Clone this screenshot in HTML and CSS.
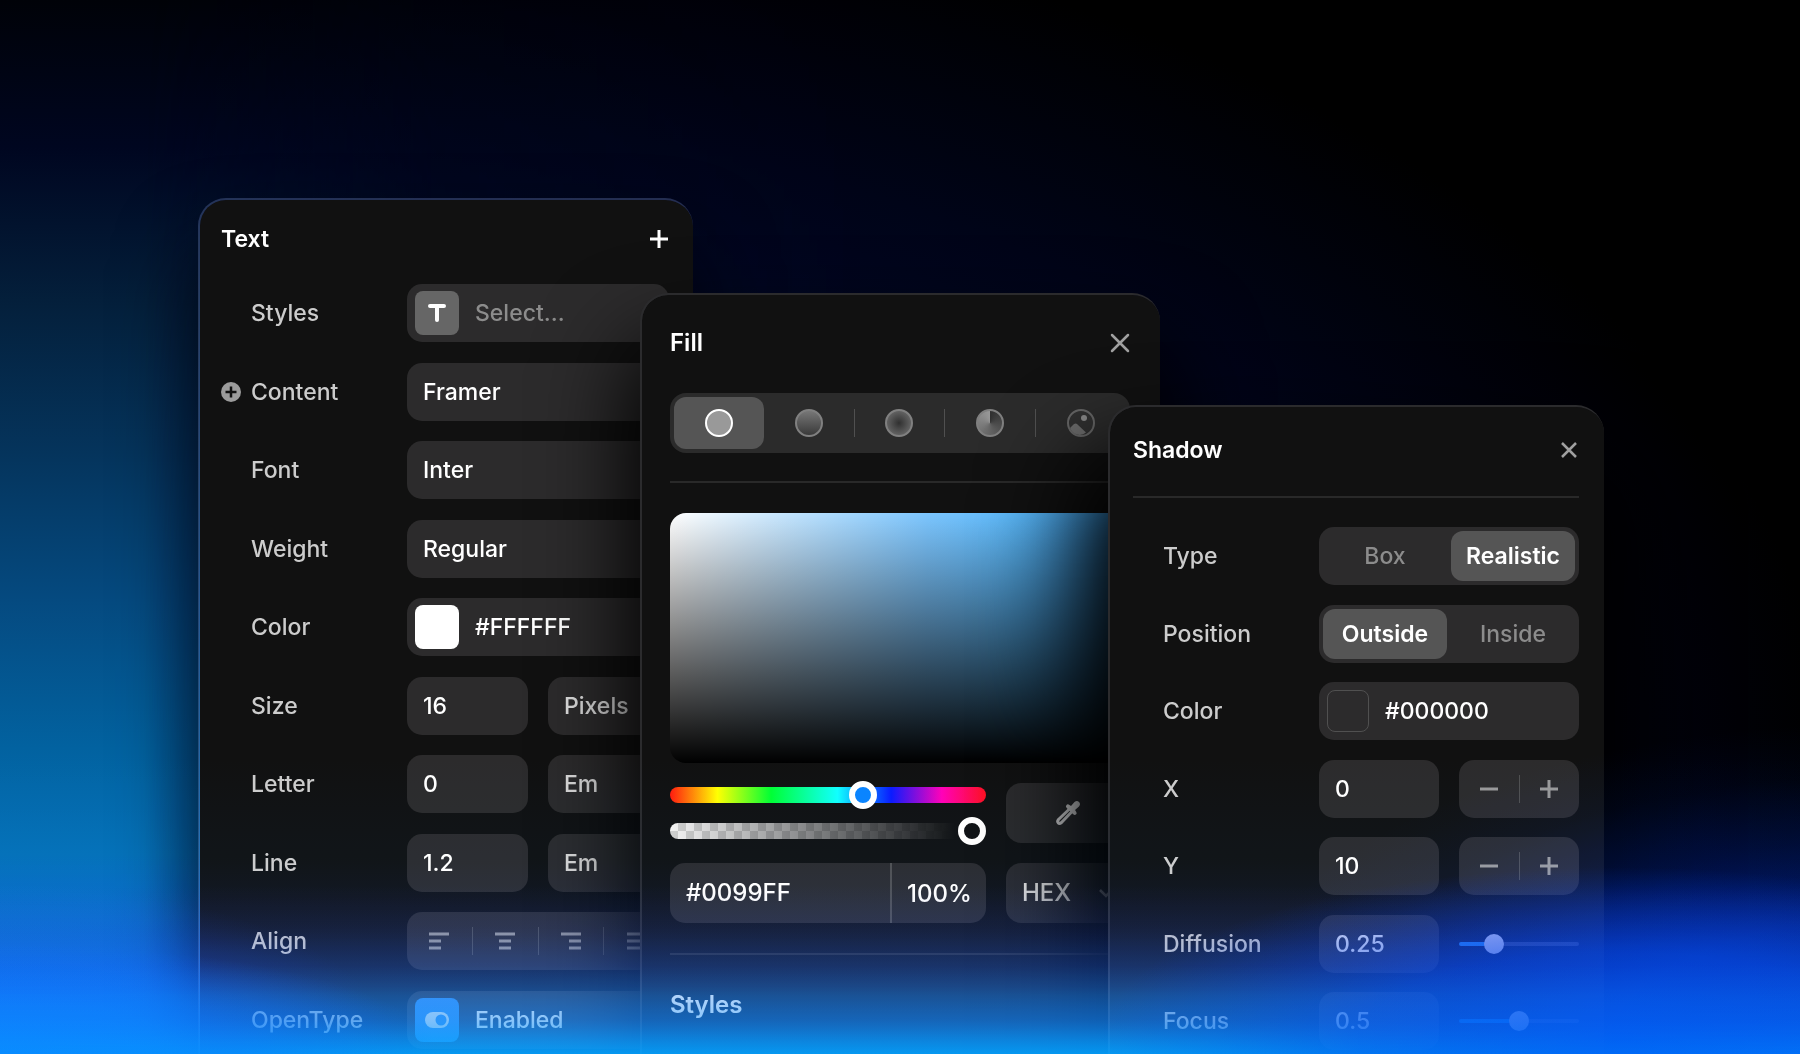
FILE: index.html
```html
<!DOCTYPE html>
<html lang="en">
<head>
<meta charset="utf-8">
<title>Text, Fill and Shadow panels</title>
<link rel="stylesheet" href="styles.css">
</head>
<body>
<main class="stage">

  <section class="panel panel-text">
    <header class="head">
      <h2>Text</h2>
      <button class="icon-btn bright" type="button" aria-label="Add"><svg width="20" height="20" viewBox="0 0 20 20"><path d="M10 1v18M1 10h18" stroke="currentColor" stroke-width="3" fill="none"/></svg></button>
    </header>
    <div class="rows rows-text">
      <div class="row"><span class="label">Styles</span>
        <button class="field value-dim" type="button"><span class="swatch swatch-t"><svg width="18" height="18" viewBox="0 0 18 18"><path d="M2 2h14M9 2v14" stroke="#fff" stroke-width="4" stroke-linecap="round" fill="none"/></svg></span>Select…</button></div>
      <div class="row"><label class="label" for="content"><svg class="mark" width="20" height="20" viewBox="0 0 20 20"><circle cx="10" cy="10" r="10" fill="#9c9c9c"/><path d="M10 4.500v11M4.500 10h11" stroke="#111" stroke-width="2.500"/></svg>Content</label><input class="field" id="content" value="Framer"></div>
      <div class="row"><label class="label" for="font">Font</label><input class="field" id="font" value="Inter"></div>
      <div class="row"><label class="label" for="weight">Weight</label><select class="field" id="weight"><option>Regular</option></select></div>
      <div class="row"><label class="label" for="color1">Color</label>
        <div class="field"><span class="swatch swatch-white"></span><input class="bare" id="color1" value="#FFFFFF"></div></div>
      <div class="row"><label class="label" for="size">Size</label><input class="field" id="size" value="16"><select class="field soft" aria-label="Size unit"><option>Pixels</option></select></div>
      <div class="row"><label class="label" for="letter">Letter</label><input class="field" id="letter" value="0"><select class="field soft" aria-label="Letter unit"><option>Em</option></select></div>
      <div class="row"><label class="label" for="line">Line</label><input class="field" id="line" value="1.2"><select class="field soft" aria-label="Line unit"><option>Em</option></select></div>
      <div class="row"><span class="label">Align</span>
        <div class="field split">
          <button type="button" aria-label="Left"><svg width="20" height="18" viewBox="0 0 20 18"><path d="M0 2h20M0 9h12M0 16h12" stroke="currentColor" stroke-width="3"/></svg></button>
          <button type="button" aria-label="Center"><svg width="20" height="18" viewBox="0 0 20 18"><path d="M0 2h20M4 9h12M4 16h12" stroke="currentColor" stroke-width="3"/></svg></button>
          <button type="button" aria-label="Right"><svg width="20" height="18" viewBox="0 0 20 18"><path d="M0 2h20M8 9h12M8 16h12" stroke="currentColor" stroke-width="3"/></svg></button>
          <button type="button" aria-label="Justify"><svg width="20" height="18" viewBox="0 0 20 18"><path d="M0 2h20M0 9h20M0 16h20" stroke="currentColor" stroke-width="3"/></svg></button>
        </div></div>
      <div class="row"><span class="label">OpenType</span>
        <button class="field" type="button"><span class="swatch swatch-blue"><svg width="24" height="16" viewBox="0 0 24 16"><rect width="24" height="16" rx="8" fill="#e4f0ff"/><circle cx="16" cy="8" r="5.500" fill="#3a88ff"/></svg></span>Enabled</button></div>
    </div>
  </section>

  <section class="panel panel-fill">
    <header class="head">
      <h2>Fill</h2>
      <button class="icon-btn" type="button" aria-label="Close fill"><svg width="20" height="20" viewBox="0 0 20 20"><path d="M2 2l16 16M18 2L2 18" stroke="currentColor" stroke-width="2.500" stroke-linecap="round"/></svg></button>
    </header>
    <div class="modes">
      <button class="on" type="button" aria-label="Solid"><i class="dot dot-solid"></i></button>
      <button type="button" aria-label="Linear"><i class="dot dot-linear"></i></button>
      <button type="button" aria-label="Radial"><i class="dot dot-radial"></i></button>
      <button type="button" aria-label="Conic"><i class="dot dot-conic"></i></button>
      <button type="button" aria-label="Image"><svg width="28" height="28" viewBox="0 0 28 28"><circle cx="14" cy="14" r="13" fill="#303030" stroke="#666" stroke-width="2"/><circle cx="17" cy="9" r="3" fill="#888"/><path d="M3 19l4-4q2-1 3 0l9 8.500q-4 3.500-9 2-5-1.500-7-6.500z" fill="#6c6c6c"/></svg></button>
    </div>
    <hr>
    <div class="picker"></div>
    <div class="tools">
      <div class="sliders">
        <input class="slide hue" type="range" min="0" max="100" value="62" aria-label="Hue">
        <input class="slide alpha" type="range" min="0" max="100" value="100" aria-label="Opacity">
      </div>
      <button class="field center" type="button" aria-label="Pick color"><svg width="26" height="26" viewBox="0 0 26 26"><path d="M15 8.500L3.500 19.500q-1.500 2-.3 3.300 1.300 1.200 3.300-.3L17.500 11" fill="none" stroke="currentColor" stroke-width="3" stroke-linejoin="round"/><path d="M11.500 5q1.200-1.500 3 0l1.500 1 3.500-4q2.500-2 4.500 0t0 4.500l-4 3.500 1 1.500q1.500 1.800 0 3-1.500 1-3-.5l-6.300-6q-1.500-1.500-.2-3z" fill="currentColor"/></svg></button>
      <div class="field pair"><input class="bare" value="#0099FF" aria-label="Hex"><input class="bare pct" value="100%" aria-label="Opacity value"></div>
      <button class="field fmt" type="button">HEX<svg width="14" height="9" viewBox="0 0 14 9"><path d="M1 1l6 6 6-6" fill="none" stroke="#aaa" stroke-width="2.500"/></svg></button>
    </div>
    <hr>
    <h3>Styles</h3>
  </section>

  <section class="panel panel-shadow">
    <header class="head">
      <h2>Shadow</h2>
      <button class="icon-btn" type="button" aria-label="Close shadow"><svg width="20" height="20" viewBox="0 0 20 20"><path d="M3 3l14 14M17 3L3 17" stroke="currentColor" stroke-width="2.500"/></svg></button>
    </header>
    <hr>
    <div class="rows rows-shadow">
      <div class="row"><span class="label">Type</span><div class="toggle"><button type="button">Box</button><button class="on" type="button">Realistic</button></div></div>
      <div class="row"><span class="label">Position</span><div class="toggle"><button class="on" type="button">Outside</button><button type="button">Inside</button></div></div>
      <div class="row"><label class="label" for="color2">Color</label><div class="field"><span class="swatch swatch-black"></span><input class="bare" id="color2" value="#000000"></div></div>
      <div class="row"><label class="label" for="sx">X</label><input class="field" id="sx" value="0">
        <div class="field split"><button type="button" aria-label="Decrease X"><svg width="20" height="20" viewBox="0 0 20 20"><path d="M1 10h18" stroke="currentColor" stroke-width="3"/></svg></button><button type="button" aria-label="Increase X"><svg width="20" height="20" viewBox="0 0 20 20"><path d="M1 10h18M10 1v18" stroke="currentColor" stroke-width="3"/></svg></button></div></div>
      <div class="row"><label class="label" for="sy">Y</label><input class="field" id="sy" value="10">
        <div class="field split"><button type="button" aria-label="Decrease Y"><svg width="20" height="20" viewBox="0 0 20 20"><path d="M1 10h18" stroke="currentColor" stroke-width="3"/></svg></button><button type="button" aria-label="Increase Y"><svg width="20" height="20" viewBox="0 0 20 20"><path d="M1 10h18M10 1v18" stroke="currentColor" stroke-width="3"/></svg></button></div></div>
      <div class="row"><label class="label" for="dif">Diffusion</label><input class="field" id="dif" value="0.25"><input class="level level-a" type="range" min="0" max="100" value="25" aria-label="Diffusion level"></div>
      <div class="row"><label class="label" for="foc">Focus</label><input class="field" id="foc" value="0.5"><input class="level level-b" type="range" min="0" max="100" value="50" aria-label="Focus level"></div>
    </div>
  </section>

  <div class="glow haze"></div>
  <div class="glow light"></div>
</main>
</body>
</html>
```
FILE: styles.css
```css
* { box-sizing: border-box; }
body { margin: 0; background: #000; color: #fff; font: 500 24px/32px Inter, "Liberation Sans", sans-serif; }
button, input, select { font: inherit; color: inherit; margin: 0; }
button { border: 0; background: none; padding: 0; }
h2, h3 { margin: 0; font-size: inherit; font-weight: 600; }
hr { width: 100%; height: 2px; margin: 0; border: 0; background: rgba(255, 255, 255, .1); }

.stage {
  position: relative;
  isolation: isolate;
  display: flex;
  justify-content: center;
  min-height: 100vh;
  overflow: hidden;
  padding-left: 2px;
  background:
    radial-gradient(ellipse 82% 85% at 20% 75%, #000e3a 0%, #000828 50%, #000418 75%, transparent 100%),
    #000;
}
.stage::before {
  content: "";
  position: absolute;
  inset: 0;
  z-index: -1;
  background: linear-gradient(#000208 0, #000620 14%, #04203c 29%, #05345c 43%, #054a80 57%, #0262a0 71%, #0570b8 81%, #0a68c8 87%, #0858d8 94%, #0870e8 100%);
  mask-image: linear-gradient(90deg, #000 8%, rgba(0, 0, 0, .8) 11%, rgba(0, 0, 0, .2) 24%, transparent 48%);
}

.panel {
  flex: none;
  border: 2px solid rgba(150, 180, 255, .24);
  border-width: 2px 0 0 2px;
  border-radius: 28px 28px 0 0;
  background: #111;
  background-clip: padding-box;
}
.panel-text { width: 495px; margin-top: 198px; padding: 0 24px 0 21px; font-size: 23px; box-shadow: 0 50px 80px rgba(0, 0, 10, .8); }
.panel-fill { width: 520px; margin: 293px 0 0 -53px; padding: 0 30px 0 28px; border-color: #2b2b2d; box-shadow: 0 60px 90px 10px #000; }
.panel-shadow { width: 496px; margin: 405px 0 0 -52px; padding: 0 25px 0 23px; border-color: #2b2b2d; font-size: 23px; box-shadow: 0 80px 90px 36px #000; }

.head { display: flex; align-items: center; justify-content: space-between; }
.panel-text .head { height: 78px; }
.panel-fill .head { height: 98px; padding-bottom: 2px; }
.panel-shadow .head { height: 89px; padding-bottom: 3px; }
.icon-btn { display: flex; color: #a0a0a0; }
.bright { color: #fff; }

.rows { display: flex; flex-direction: column; justify-content: space-between; }
.rows-text { min-height: 765px; margin-top: 6px; }
.rows-shadow { min-height: 523px; margin-top: 29px; }
.row { display: grid; grid-template-columns: 136px minmax(0, 1fr) minmax(0, 1fr); gap: 20px; align-items: center; padding-left: 30px; }
.row > :nth-child(2):last-child { grid-column: span 2; }
.label { display: flex; align-items: center; color: #ccc; }
.mark { flex: none; margin: 0 10px 0 -30px; }

.field {
  display: flex;
  align-items: center;
  width: 100%;
  height: 58px;
  padding: 0 16px;
  border: 0;
  border-radius: 15px;
  outline: 0;
  background: #2c2b2c;
  appearance: none;
}
.value-dim { color: #8c8c8c; }
.soft { color: #e0e0e0; }
.bare { flex: 1; min-width: 0; width: 100%; padding: 0; border: 0; outline: 0; background: none; }
.swatch { display: flex; flex: none; align-items: center; justify-content: center; width: 44px; height: 44px; margin: 0 16px 0 -8px; border-radius: 8px; }
.swatch-t { background: #666; }
.swatch-white { background: #fff; }
.swatch-blue { background: #3a88ff; }
.swatch-black { width: 42px; height: 42px; border: 1px solid #505050; }
.split { padding: 0; color: #999; }
.split button { display: flex; flex: 1; align-items: center; justify-content: center; height: 28px; }
.split button + button, .modes button + button + button { border-left: 1px solid #505050; }

.modes { display: flex; align-items: center; height: 60px; padding: 4px; border-radius: 16px; background: #2b2b2b; }
.modes button { display: flex; flex: 1; align-items: center; justify-content: center; height: 28px; }
.modes .on { height: 52px; border-radius: 12px; background: #555; }
.dot { width: 28px; height: 28px; border: 2px solid #808080; border-radius: 50%; background-origin: border-box; }
.dot-solid { border-color: #fff; background: #999; }
.dot-linear { background: linear-gradient(#777, #3a3a3a); }
.dot-radial { background: radial-gradient(circle, #303030, #777); }
.dot-conic { background: conic-gradient(#303030, #999); }

.modes + hr { margin-top: 28px; }
.picker {
  height: 250px;
  margin-top: 30px;
  border-radius: 16px;
  background:
    linear-gradient(transparent, #000),
    linear-gradient(90deg, #fff, #7cc6ff 56%, #5cbafc 75%, #40adff);
}
.tools { display: grid; grid-template-columns: 316px 1fr; gap: 20px; margin-top: 20px; }
.tools .field { height: 60px; }
.sliders { display: flex; flex-direction: column; gap: 20px; padding-top: 4px; }
.slide { width: 100%; height: 16px; border-radius: 8px; outline: 0; appearance: none; }
.hue { background: linear-gradient(90deg, #ff1a0d, #ff0 15%, #0f3 32%, #1ff 53%, #0a84ff 62%, #0a1aff 70%, #ff00b8 86%, #ff1020); }
.alpha { background: linear-gradient(90deg, transparent, #111 90%), repeating-conic-gradient(#d0d0d0 0 25%, #f4f4f4 0 50%) 0 0 / 16px 16px; }
.slide::-webkit-slider-thumb { width: 28px; height: 28px; border: 6px solid #fff; border-radius: 50%; background: #0a84ff; appearance: none; }
.alpha::-webkit-slider-thumb { background: #111; }
.center { justify-content: center; color: #e4e4e4; }
.pair { gap: 14px; }
.pair .pct { flex: 0 0 80px; height: 60px; padding-left: 15px; border-left: 2px solid #505050; }
.fmt { gap: 28px; color: #eee; }
.tools + hr { margin-top: 30px; }
.panel h3 { margin-top: 34px; }

.toggle { display: flex; gap: 4px; height: 58px; padding: 4px; border-radius: 15px; background: #2c2b2c; }
.toggle button { flex: 1 1 0; border-radius: 12px; color: #8c8c8c; }
.toggle .on { background: #555; color: #fff; font-weight: 600; }

.level { width: 100%; height: 4px; border-radius: 2px; outline: 0; appearance: none; }
.level-a { background: linear-gradient(90deg, #3090ff 29%, #404050 29%); }
.level-b { background: linear-gradient(90deg, #1080ff 50%, #404050 50%); }
.level::-webkit-slider-thumb { width: 20px; height: 20px; border-radius: 50%; background: #e4e4ff; appearance: none; }

.glow {
  position: absolute;
  inset: auto 0 0;
  height: 420px;
  pointer-events: none;
}
/* tints and fades the panels near the bottom edge */
.haze {
  background:
    radial-gradient(ellipse 520px 170px at 90% 96%, rgba(0, 50, 225, .8) 0, rgba(0, 48, 220, .6) 50%, transparent 100%),
    radial-gradient(ellipse 440px 110px at 0 100%, rgba(10, 100, 255, .8), rgba(10, 90, 255, .5) 55%, transparent),
    linear-gradient(transparent 60%, rgba(50, 80, 190, .14) 72%, rgba(40, 100, 230, .3) 84%, rgba(20, 115, 240, .5) 92%, rgba(4, 135, 250, .85) 100%);
}
/* adds light on top without dulling text */
.light {
  mix-blend-mode: screen;
  background:
    radial-gradient(ellipse 660px 330px at 104% 100%, rgba(0, 50, 220, .6) 0, rgba(0, 46, 210, .5) 40%, rgba(0, 36, 170, .28) 65%, rgba(0, 26, 120, .1) 84%, transparent 100%),
    radial-gradient(ellipse 400px 170px at 0 100%, rgba(0, 50, 255, .5), rgba(0, 50, 255, .25) 55%, transparent),
    linear-gradient(transparent 30%, rgba(0, 30, 60, .14) 54%, rgba(6, 40, 120, .24) 70%, rgba(6, 50, 150, .36) 79%, rgba(6, 76, 160, .55) 86%, rgba(4, 70, 170, .7) 94%, rgba(0, 80, 200, .8) 100%);
}
```
